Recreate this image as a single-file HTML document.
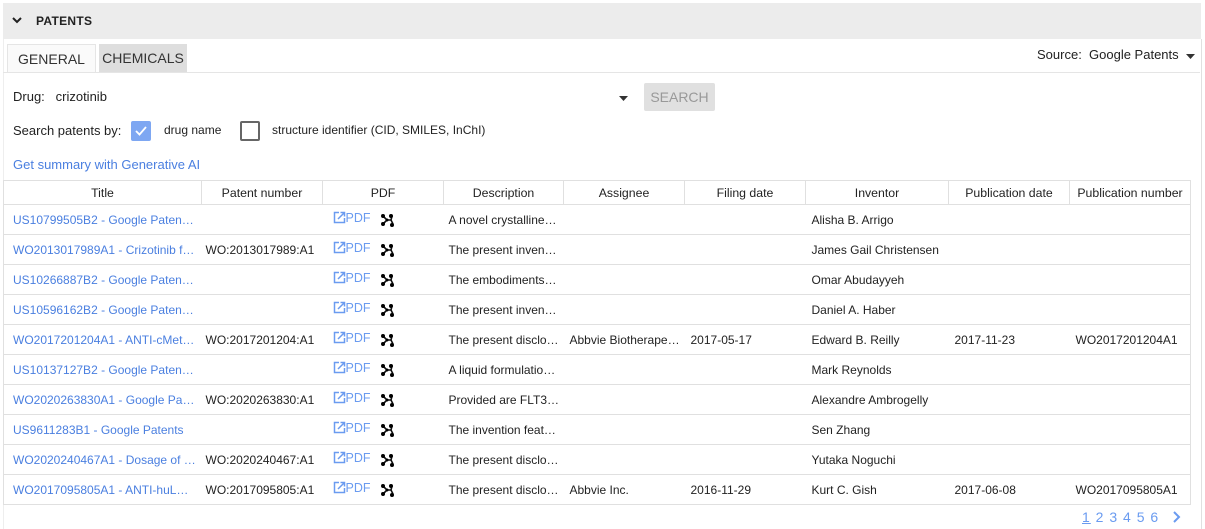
<!DOCTYPE html><html><head><style>
body{margin:0;width:1205px;height:529px;background:#fff;font-family:"Liberation Sans",sans-serif;color:#222;position:relative;overflow:hidden}
.a{position:absolute;white-space:nowrap}
.hdr{left:3px;top:3px;width:1198px;height:36px;background:#ececec}
.panel{left:3px;top:39px;width:1197px;height:490px;border-right:1px solid #e0e0e0;border-left:1px solid #eee}
table{position:absolute;left:3px;top:180px;width:1187px;border-collapse:collapse;font-size:12px;table-layout:fixed}
td,th{height:29px;border-bottom:1px solid #e0e0e0;padding:0 0 0 8px;overflow:hidden;white-space:nowrap;text-overflow:ellipsis}
th{font-weight:normal;text-align:center;border:1px solid #e0e0e0;height:23px;padding:0;color:#222;font-size:12.3px}
tr td:first-child{border-left:1px solid #e0e0e0;padding-left:9px}
tr td:last-child{border-right:1px solid #e0e0e0}
a{color:#4a7fe0;text-decoration:none}
.pdf{color:#6a9bf0;font-size:12.5px;position:relative;top:-2px}
</style></head><body>
<div class="a hdr"></div>
<div class="a panel"></div>
<svg class="a" style="left:12px;top:16px" width="10" height="8"><path d="M1 2l4 4 4-4" stroke="#222" stroke-width="2" fill="none"/></svg>
<div class="a" style="left:36px;top:14px;font-size:12px;font-weight:bold;letter-spacing:.3px">PATENTS</div>
<div class="a" style="left:7px;top:44px;width:87px;height:28px;border:1px solid #e5e5e5;border-bottom:none;background:#fafafa;font-size:14px;text-align:center;line-height:28px;color:#333">GENERAL</div>
<div class="a" style="left:99px;top:44px;width:88px;height:28px;background:#dedede;font-size:14px;text-align:center;line-height:28px;color:#333">CHEMICALS</div>
<div class="a" style="left:3px;top:72px;width:1197px;height:1px;background:#e5e5e5"></div>
<div class="a" style="left:1037px;top:47px;font-size:13px">Source:&nbsp; Google Patents</div>
<svg class="a" style="left:1186px;top:54px" width="9" height="5"><path d="M0 0h9L4.5 5z" fill="#333"/></svg>
<div class="a" style="left:13px;top:89px;font-size:13px">Drug:&nbsp;&nbsp; crizotinib</div>
<svg class="a" style="left:619px;top:96px" width="9" height="5"><path d="M0 0h9L4.5 5z" fill="#333"/></svg>
<div class="a" style="left:644px;top:83px;width:71px;height:28px;background:#e0e0e0;border-radius:2px;color:#999;font-size:14px;text-align:center;line-height:28px">SEARCH</div>
<div class="a" style="left:13px;top:123px;font-size:13px">Search patents by:</div>
<div class="a" style="left:131px;top:121px;width:20px;height:20px;background:#7ea7f2;border-radius:2px"></div>
<svg class="a" style="left:134px;top:125px" width="14" height="12"><path d="M2 6l3.5 3.5L12 2" stroke="#fff" stroke-width="1.8" fill="none"/></svg>
<div class="a" style="left:164px;top:123px;font-size:12px">drug name</div>
<div class="a" style="left:240px;top:121px;width:16px;height:16px;border:2px solid #666;border-radius:2px"></div>
<div class="a" style="left:272px;top:123px;font-size:12px">structure identifier (CID, SMILES, InChI)</div>
<div class="a" style="left:13px;top:157px;font-size:13px;color:#4a7fe0">Get summary with Generative AI</div>
<table>
<colgroup><col width="198"><col width="121"><col width="121"><col width="120"><col width="121"><col width="121"><col width="143"><col width="121"><col width="121"></colgroup>
<tr><th>Title</th><th>Patent number</th><th>PDF</th><th>Description</th><th>Assignee</th><th>Filing date</th><th>Inventor</th><th>Publication date</th><th>Publication number</th></tr>
<tbody id="b"></tbody>
</table>
<script>
var R=[["US10799505B2 - Google Paten…","","A novel crystalline…","","","Alisha B. Arrigo","",""],
["WO2013017989A1 - Crizotinib f…","WO:2013017989:A1","The present inven…","","","James Gail Christensen","",""],
["US10266887B2 - Google Paten…","","The embodiments…","","","Omar Abudayyeh","",""],
["US10596162B2 - Google Paten…","","The present inven…","","","Daniel A. Haber","",""],
["WO2017201204A1 - ANTI-cMet…","WO:2017201204:A1","The present disclo…","Abbvie Biotherape…","2017-05-17","Edward B. Reilly","2017-11-23","WO2017201204A1"],
["US10137127B2 - Google Paten…","","A liquid formulatio…","","","Mark Reynolds","",""],
["WO2020263830A1 - Google Pa…","WO:2020263830:A1","Provided are FLT3…","","","Alexandre Ambrogelly","",""],
["US9611283B1 - Google Patents","","The invention feat…","","","Sen Zhang","",""],
["WO2020240467A1 - Dosage of …","WO:2020240467:A1","The present disclo…","","","Yutaka Noguchi","",""],
["WO2017095805A1 - ANTI-huL…","WO:2017095805:A1","The present disclo…","Abbvie Inc.","2016-11-29","Kurt C. Gish","2017-06-08","WO2017095805A1"]];
var ic='<svg width="13" height="13" style="vertical-align:-2px"><path d="M6 1.5H1.5v10h10V7" stroke="#6a9bf0" stroke-width="1.5" fill="none"/><path d="M5 8l6-6M7.5 1.5h4v4" stroke="#6a9bf0" stroke-width="1.5" fill="none"/></svg>';
var mol='<svg width="14" height="14" style="vertical-align:-3px;margin-left:9px"><path d="M3 3l4 4-4 4M7 7h4l2 4M11 7l1-4" stroke="#111" stroke-width="1.6" fill="none"/><circle cx="3" cy="3" r="2"/><circle cx="3" cy="11" r="2"/><circle cx="11" cy="3" r="2"/><circle cx="12" cy="12" r="2"/><circle cx="7" cy="7" r="1.5"/></svg>';
var h='';R.forEach(function(r){h+='<tr><td><a>'+r[0]+'</a></td><td style="padding-left:4px">'+r[1]+'</td><td style="padding-left:10px"><span class="pdf">'+ic+'PDF</span>'+mol+'</td><td style="padding-left:5px">'+r[2]+'</td><td style="padding-left:6px">'+r[3]+'</td><td style="padding-left:6px">'+r[4]+'</td><td style="padding-left:6px">'+r[5]+'</td><td style="padding-left:6px">'+r[6]+'</td><td style="padding-left:6px">'+r[7]+'</td></tr>'});
document.getElementById('b').innerHTML=h;
</script>
<div class="a" style="left:1082px;top:509px;font-size:14px;color:#6a9bf0;letter-spacing:1px"><u>1</u> 2 3 4 5 6</div>
<svg class="a" style="left:1172px;top:511px" width="10" height="12"><path d="M2 1l5 5-5 5" stroke="#6a9bf0" stroke-width="2" fill="none"/></svg>
</body></html>
